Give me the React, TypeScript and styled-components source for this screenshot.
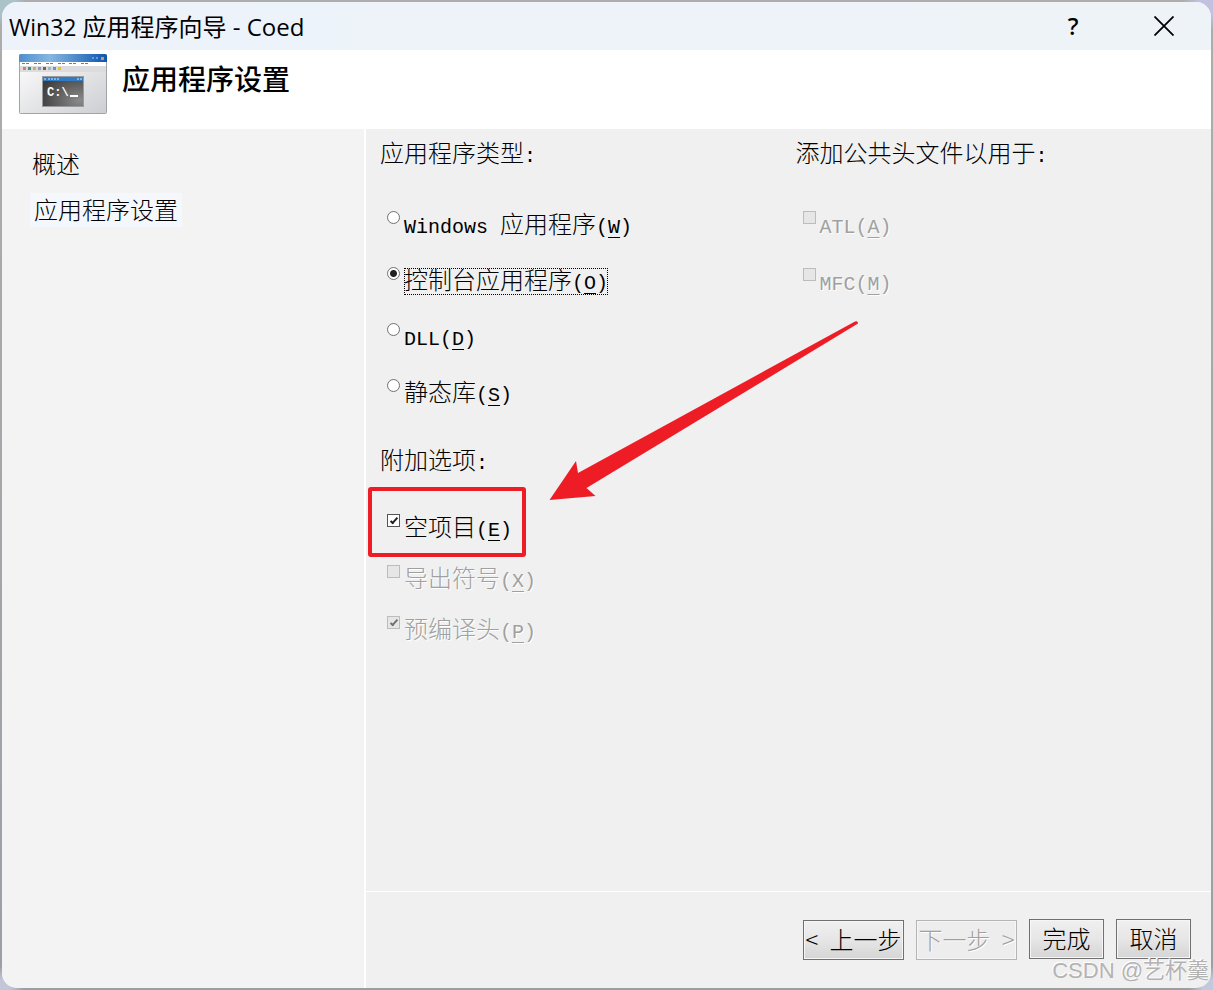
import React from "react";
import styled, { createGlobalStyle, css } from "styled-components";

const GlobalStyle = createGlobalStyle`
  *, *::before, *::after { box-sizing: border-box; }
  body { margin: 0; background: #a9abae; }
  h1, h2, p, ul, fieldset { margin: 0; padding: 0; }
  ul { list-style: none; }
  fieldset { border: 0; min-width: 0; }
  button, input { font: inherit; margin: 0; }
`;

const Desktop = styled.div`
  display: flex;
  min-height: 100vh;
  padding: 2px;
  background:
    radial-gradient(circle at 0 0, #a9c3c8 0 16px, transparent 26px),
    radial-gradient(circle at 100% 0, #c3c1e0 0 14px, transparent 30px),
    radial-gradient(circle at 0 100%, #c2c6d6 0 10px, transparent 24px),
    radial-gradient(circle at 100% 100%, #c2c9dc 0 10px, transparent 24px),
    linear-gradient(#adadad, #9b9fa4);
  font-family: "Noto Sans CJK SC", sans-serif;
  font-size: 24px;
  font-weight: 300;
  line-height: 24px;
  color: #000;
`;

const Dialog = styled.main`
  position: relative;
  display: flex;
  flex: 1;
  flex-direction: column;
  overflow: hidden;
  border-radius: 15px;
  background: #f0f0f0;
`;

const TitleBar = styled.header`
  display: flex;
  align-items: center;
  height: 48px;
  padding: 0 31px 0 7px;
  background: linear-gradient(90deg, #eef3fb, #edf3f7);
`;

const WindowTitle = styled.h1`
  flex: 1;
  font-size: 24px;
  font-weight: 400;
  line-height: 28px;
`;

const TitleLatin = styled.span<{ $size: number }>`
  font-family: "Open Sans", sans-serif;
  font-size: ${(p) => p.$size}px;
  line-height: 0;
`;

const CaptionButton = styled.button`
  display: grid;
  place-items: center;
  width: 32px;
  height: 32px;
  margin-left: 59px;
  padding: 0;
  border: 0;
  background: none;
  font-family: "Noto Sans", sans-serif;
  font-size: 24px;
  font-weight: 500;
  line-height: 28px;
`;

const Banner = styled.div`
  display: flex;
  gap: 15px;
  height: 79px;
  padding: 4px 17px;
  background: #fff;
`;

const BannerTitle = styled.h2`
  padding-top: 8px;
  font-size: 28px;
  font-weight: 500;
  line-height: 32px;
`;

const Body = styled.div`
  display: flex;
  flex: 1;
`;

const Sidebar = styled.nav`
  flex: 0 0 364px;
  padding: 18px 28px;
  border-right: 2px solid #fff;
  background: #f3f3f3;
`;

const SideList = styled.ul`
  display: flex;
  flex-direction: column;
  align-items: flex-start;
  gap: 12px;
`;

const SideLink = styled.a<{ $active?: boolean }>`
  display: block;
  height: 34px;
  padding: 0 ${(p) => (p.$active ? 4 : 2)}px;
  background: ${(p) => (p.$active ? "#f4f7fc" : "none")};
  color: #000;
  line-height: 32px;
  text-decoration: none;
`;

const Content = styled.div`
  display: flex;
  flex: 1;
  flex-direction: column;
  min-width: 0;
`;

const Settings = styled.form`
  display: grid;
  flex: 1;
  grid-template-columns: 1fr 1fr;
  padding: 11px 0 0 14px;
`;

const Column = styled.div`
  display: flex;
  flex-direction: column;
  gap: 40px;
`;

const Group = styled.fieldset``;

const GroupTitle = styled.legend`
  height: 28px;
  padding: 0;
`;

const Options = styled.div<{ $top: number; $gap: number }>`
  position: relative;
  display: flex;
  flex-direction: column;
  align-items: flex-start;
  gap: ${(p) => p.$gap}px;
  padding: ${(p) => p.$top}px 0 0 7px;
`;

const Option = styled.label<{ $disabled?: boolean }>`
  display: flex;
  align-items: flex-start;
  gap: 4px;
  height: 28px;
  white-space: nowrap;
  ${(p) =>
    p.$disabled &&
    css`
      color: #a0a0a0;
      text-shadow: 1px 1px 0 #fff;
    `}
`;

const OptionText = styled.span<{ $focused?: boolean }>`
  margin-top: 1px;
  height: 27px;
  line-height: 22px;
  outline: ${(p) => (p.$focused ? "1px dotted #000" : "none")};
  outline-offset: -1px;
`;

const Latin = styled.span`
  font-family: "Liberation Mono", monospace;
  font-size: 20px;
  font-weight: 400;
  line-height: 0;
  white-space: pre;
`;

const AccessKey = styled.u`
  text-decoration-thickness: 1px;
  text-underline-offset: 4px;
`;

const Radio = styled.input.attrs({ type: "radio" })`
  appearance: none;
  width: 13px;
  height: 13px;
  border: 1px solid #707070;
  border-radius: 50%;
  background: #fff;

  &:checked {
    background: radial-gradient(circle, #222 0 3px, #fff 4px);
  }
`;

const Checkbox = styled.input.attrs({ type: "checkbox" })`
  appearance: none;
  display: grid;
  place-items: center;
  width: 13px;
  height: 13px;
  border: 1px solid #555;
  background: #fff;
  color: #222;

  &:disabled {
    border-color: #bcbcbc;
    background: #e6e6e6;
    color: #707070;
  }

  &:checked::after {
    content: "";
    width: 4px;
    height: 8px;
    margin-bottom: 2px;
    border: solid currentColor;
    border-width: 0 2px 2px 0;
    transform: rotate(42deg);
  }
`;

const Highlight = styled.span`
  position: absolute;
  top: 12px;
  left: -12px;
  width: 158px;
  height: 70px;
  border: 4px solid #ee1c25;
  border-radius: 3px;
  pointer-events: none;
`;

const Arrow = styled.svg`
  position: absolute;
  top: -155px;
  left: 168px;
  pointer-events: none;
`;

const Footer = styled.footer`
  display: flex;
  justify-content: flex-end;
  gap: 12px;
  height: 97px;
  padding: 27px 20px 0 0;
  border-top: 1px solid #fff;
`;

const PushButton = styled.button<{ $wide?: boolean }>`
  width: ${(p) => (p.$wide ? 101 : 75)}px;
  height: 40px;
  margin-top: ${(p) => (p.$wide ? 1 : 0)}px;
  padding: 0 0 3px;
  border: 1px solid #707070;
  background: linear-gradient(#f0f0f0, #e6e6e6 50%, #d5d5d5);
  box-shadow: inset 0 0 0 1px #f6f6f6;
  color: #000;
  white-space: nowrap;

  &:disabled {
    border-color: #b5b5b5;
    background: #ededed;
    color: #a0a0a0;
    text-shadow: 1px 1px 0 #fff;
  }
`;

const Chevron = styled.span<{ $align: "left" | "right" }>`
  display: inline-block;
  width: 24px;
  text-align: ${(p) => p.$align};
`;

const Watermark = styled.p`
  position: absolute;
  right: 2px;
  bottom: 3px;
  color: rgba(170, 170, 170, 0.9);
  font-family: "Liberation Sans", "Noto Sans CJK SC", sans-serif;
  font-size: 22px;
  font-weight: 400;
  line-height: 28px;
  text-shadow: -1px -1px 0 #fff;
  pointer-events: none;
`;

function AppIcon() {
  const toolColors = ["#d9825b", "#3f8f86", "#c9ae62", "#8e9cb0", "#8a5a44", "#a8b4c4", "#5b9bd0", "#e8c21f"];
  return (
    <svg width="88" height="60" viewBox="0 0 88 60" aria-hidden="true">
      <defs>
        <linearGradient id="bar" x1="0" x2="1">
          <stop offset="0" stopColor="#4e8fcd" />
          <stop offset="0.35" stopColor="#86b6e2" />
          <stop offset="1" stopColor="#0d56ac" />
        </linearGradient>
        <linearGradient id="pane" x1="0" y1="0" x2="1" y2="1">
          <stop offset="0" stopColor="#fff" />
          <stop offset="1" stopColor="#cdced2" />
        </linearGradient>
        <radialGradient id="console" cx="0.9" cy="0.8" r="1">
          <stop offset="0" stopColor="#8a8a8a" />
          <stop offset="1" stopColor="#3c3c3c" />
        </radialGradient>
      </defs>
      <rect x="0.5" y="0.5" width="87" height="59" rx="1" fill="url(#pane)" stroke="#a2a3a8" />
      <path d="M0 8V2Q0 0 2 0H86Q88 0 88 2V8Z" fill="url(#bar)" />
      <path d="M73 3h2v2h-2zM77 3h2v2h-2z" fill="#5a9cf0" />
      <rect x="82" y="3" width="3" height="3" fill="#e08a6c" />
      <rect x="1" y="8" width="86" height="4" fill="#fff" />
      <path d="M3 9.5H11M15 9.5H23M27 9.5H35M39 9.5H46M50 9.5H58M62 9.5H70" stroke="#777b84" strokeDasharray="3 1" />
      <rect x="1" y="12" width="86" height="6" fill="#dcdcde" />
      {toolColors.map((color, i) => (
        <rect key={color} x={4 + i * 5} y="13" width="3" height="3" fill={color} />
      ))}
      <rect x="23.5" y="22.5" width="41" height="30" fill="url(#console)" stroke="#9a9b9f" />
      <rect x="24" y="23" width="40" height="4" fill="#2f7cc4" />
      <path d="M25 25h2M29 25h12M58 25h2M61 25h2" stroke="#dcebfa" strokeDasharray="2 1" />
      <text x="28" y="42" fill="#fff" fontFamily="Liberation Mono" fontSize="12" fontWeight="700">
        C:\
      </text>
      <rect x="51" y="41" width="8" height="2" fill="#fff" />
    </svg>
  );
}

type LabelProps = { text: string; latin?: string; accessKey: string };

function KeyedText({ text, latin = "", accessKey }: LabelProps) {
  return (
    <>
      {latin && <Latin>{latin}</Latin>}
      {text}
      <Latin>
        (<AccessKey>{accessKey}</AccessKey>)
      </Latin>
    </>
  );
}

const appTypes = [
  { latin: "Windows ", text: "应用程序", accessKey: "W" },
  { text: "控制台应用程序", accessKey: "O" },
  { latin: "DLL", text: "", accessKey: "D" },
  { text: "静态库", accessKey: "S" },
];

const extraOptions = [
  { text: "空项目", accessKey: "E", checked: true, disabled: false },
  { text: "导出符号", accessKey: "X", checked: false, disabled: true },
  { text: "预编译头", accessKey: "P", checked: true, disabled: true },
];

const headerOptions = [
  { latin: "ATL", text: "", accessKey: "A" },
  { latin: "MFC", text: "", accessKey: "M" },
];

export default function App() {
  return (
    <Desktop>
      <GlobalStyle />
      <Dialog>
        <TitleBar>
          <WindowTitle>
            <TitleLatin $size={23}>Win32 </TitleLatin>应用程序向导<TitleLatin $size={24}> - Coed</TitleLatin>
          </WindowTitle>
          <CaptionButton type="button" aria-label="帮助">?</CaptionButton>
          <CaptionButton type="button" aria-label="关闭">
            <svg width="20" height="20" viewBox="0 0 20 20" stroke="#000" strokeWidth="1.8" aria-hidden="true">
              <path d="M0.5 0.5L19.5 19.5M19.5 0.5L0.5 19.5" />
            </svg>
          </CaptionButton>
        </TitleBar>
        <Banner>
          <AppIcon />
          <BannerTitle>应用程序设置</BannerTitle>
        </Banner>
        <Body>
          <Sidebar>
            <SideList>
              <li><SideLink href="#overview">概述</SideLink></li>
              <li><SideLink href="#settings" $active aria-current="page">应用程序设置</SideLink></li>
            </SideList>
          </Sidebar>
          <Content>
            <Settings id="settings">
              <Column>
                <Group>
                  <GroupTitle>应用程序类型<Latin>:</Latin></GroupTitle>
                  <Options $top={43} $gap={28}>
                    {appTypes.map((item, i) => (
                      <Option key={item.accessKey}>
                        <Radio name="appType" defaultChecked={i === 1} />
                        <OptionText $focused={i === 1}><KeyedText {...item} /></OptionText>
                      </Option>
                    ))}
                  </Options>
                </Group>
                <Group>
                  <GroupTitle>附加选项<Latin>:</Latin></GroupTitle>
                  <Options $top={39} $gap={23}>
                    {extraOptions.map(({ checked, disabled, ...item }) => (
                      <Option key={item.accessKey} $disabled={disabled}>
                        <Checkbox defaultChecked={checked} disabled={disabled} />
                        <OptionText><KeyedText {...item} /></OptionText>
                      </Option>
                    ))}
                    <Highlight />
                    <Arrow width="312" height="182" viewBox="0 0 312 182" aria-hidden="true">
                      <path
                        d="M1.5 180L28 141L30 153L307 1.5Q310 0.5 310 3.5L38.5 168L47.5 176Z"
                        fill="#ee1c25"
                      />
                    </Arrow>
                  </Options>
                </Group>
              </Column>
              <Group>
                <GroupTitle>添加公共头文件以用于<Latin>:</Latin></GroupTitle>
                <Options $top={43} $gap={29}>
                  {headerOptions.map((item) => (
                    <Option key={item.accessKey} $disabled>
                      <Checkbox disabled />
                      <OptionText><KeyedText {...item} /></OptionText>
                    </Option>
                  ))}
                </Options>
              </Group>
            </Settings>
            <Footer>
              <PushButton type="button" $wide><Chevron $align="left">&lt;</Chevron>上一步</PushButton>
              <PushButton type="button" $wide disabled>下一步<Chevron $align="right">&gt;</Chevron></PushButton>
              <PushButton type="button">完成</PushButton>
              <PushButton type="button">取消</PushButton>
            </Footer>
          </Content>
        </Body>
        <Watermark>CSDN @艺杯羹</Watermark>
      </Dialog>
    </Desktop>
  );
}
